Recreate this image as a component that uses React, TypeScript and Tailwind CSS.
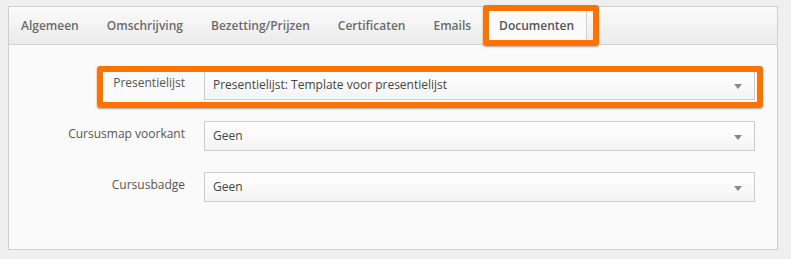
import React from "react";

const font = { fontFamily: '"Open Sans", "Noto Sans", sans-serif' };

function Select({ value }: { value: string }) {
  return (
    <div className="relative flex h-[30px] w-[551px] items-center border border-[#cccccc] bg-gradient-to-b from-[#ffffff] to-[#f4f4f4] pl-[8px] text-[12px] text-[#444444]">
      <span>{value}</span>
      <span className="absolute right-[12px] top-[13px] h-0 w-0 border-x-[4px] border-t-[5px] border-x-transparent border-t-[#888888]" />
    </div>
  );
}

function Row({ label, value }: { label: string; value: string }) {
  return (
    <div className="flex items-start">
      <div className="w-[176px] pt-[4px] text-right text-[12px] text-[#555555]">{label}</div>
      <div className="ml-[19px]">
        <Select value={value} />
      </div>
    </div>
  );
}

export default function App() {
  const tabs = ["Algemeen", "Omschrijving", "Bezetting/Prijzen", "Certificaten", "Emails"];
  return (
    <div className="relative h-[259px] w-[791px] bg-[#efefef] pl-[8px] pt-[6px]" style={font}>
      <div className="h-[244px] w-[770px] border border-[#cfcfcf] bg-[#fafafa]">
        <div className="flex h-[38px] border-b border-[#d4d4d4] bg-gradient-to-b from-[#fbfbfb] to-[#ebebeb]">
          <div className="ml-[-2px] flex">
            {tabs.map((t) => (
              <div key={t} className="flex items-center px-[14px] text-[12px] font-semibold text-[#6b6b6b]">
                {t}
              </div>
            ))}
          </div>
          <div className="mb-[-1px] ml-[1px] flex w-[101px] items-center border-r border-[#d0d0d0] bg-[#fafafa] pl-[13px] text-[12px] font-semibold text-[#555555]">
            Documenten
          </div>
        </div>
        <div className="flex flex-col gap-[21px] pt-[25px]">
          <Row label="Presentielijst" value="Presentielijst: Template voor presentielijst" />
          <Row label="Cursusmap voorkant" value="Geen" />
          <Row label="Cursusbadge" value="Geen" />
        </div>
      </div>
      <div className="absolute left-[483px] top-[5px] h-[41px] w-[116px] rounded-[3px] border-[6px] border-[#ff7200] shadow-[0_1px_2px_rgba(0,0,0,0.35)]" />
      <div className="absolute left-[97px] top-[66px] h-[42px] w-[666px] rounded-[3px] border-[6px] border-[#ff7200] shadow-[0_1px_2px_rgba(0,0,0,0.35)]" />
    </div>
  );
}
